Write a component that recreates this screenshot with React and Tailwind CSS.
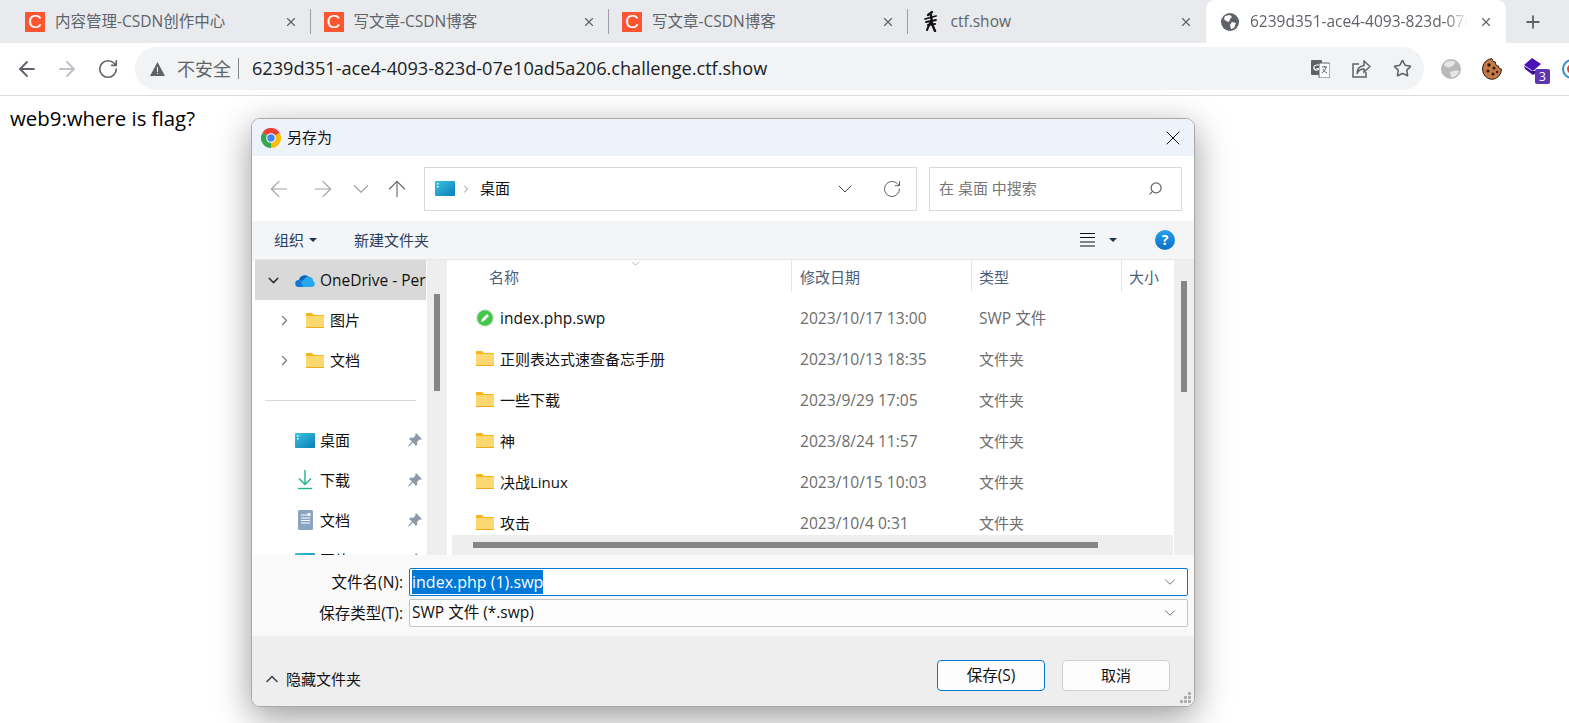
import { ChevronDown, ChevronRight, ChevronUp, ArrowLeft, ArrowRight, ArrowUp, RotateCw, X, Plus, Star, Search } from 'lucide-react';

const uiFont = "font-['Open_Sans','Noto_Sans_CJK_SC',sans-serif]";

const tabs = [
  { title: '内容管理-CSDN创作中心', icon: 'csdn' },
  { title: '写文章-CSDN博客', icon: 'csdn' },
  { title: '写文章-CSDN博客', icon: 'csdn' },
  { title: 'ctf.show', icon: 'ctf' },
];

const files = [
  { name: 'index.php.swp', date: '2023/10/17 13:00', type: 'SWP 文件', swp: true },
  { name: '正则表达式速查备忘手册', date: '2023/10/13 18:35', type: '文件夹' },
  { name: '一些下载', date: '2023/9/29 17:05', type: '文件夹' },
  { name: '神', date: '2023/8/24 11:57', type: '文件夹' },
  { name: '决战Linux', date: '2023/10/15 10:03', type: '文件夹' },
  { name: '攻击', date: '2023/10/4 0:31', type: '文件夹' },
];

const CsdnIcon = () => (
  <div className="w-5 h-5 bg-[#fc5531] flex items-center justify-center text-white text-[19px] leading-none font-['Liberation_Sans',sans-serif]">C</div>
);

const CtfIcon = () => (
  <svg width="16" height="21" viewBox="0 0 16 21" fill="none" stroke="#111" strokeLinecap="round">
    <path d="M9 1L5 4" strokeWidth="2.200" />
    <path d="M2 8l11-3M3 11l10-2" strokeWidth="1.800" />
    <path d="M8 4l1 9 3 7" strokeWidth="2.400" />
    <path d="M7 12L4 19M5 14l7-1" strokeWidth="2" />
  </svg>
);

const GlobeIcon = () => (
  <svg width="18" height="18" viewBox="0 0 18 18">
    <circle cx="9" cy="9" r="9" fill="#5f6368" />
    <path d="M4 3l5-1 2 2-2 2-1 3-3-1-2-2zM11 9l4 1-2 5-3 1-1-4z" fill="#fff" />
  </svg>
);

const ChromeIcon = () => (
  <svg width="20" height="20" viewBox="0 0 20 20">
    <path d="M10 10L1.3 5A10 10 0 0 1 18.7 5z" fill="#ea4335" />
    <path d="M10 10L18.7 5A10 10 0 0 1 10 20z" fill="#fbbc05" />
    <path d="M10 10L10 20A10 10 0 0 1 1.3 5z" fill="#34a853" />
    <circle cx="10" cy="10" r="4.8" fill="#fff" />
    <circle cx="10" cy="10" r="3.7" fill="#4285f4" />
  </svg>
);

const DesktopIcon = ({ id }) => (
  <svg width="20" height="15" viewBox="0 0 20 15">
    <defs>
      <linearGradient id={id} x1="0" y1="0" x2="1" y2="1">
        <stop offset="0" stopColor="#3cc4e0" />
        <stop offset="1" stopColor="#0a7db8" />
      </linearGradient>
    </defs>
    <rect width="20" height="15" rx="1" fill={`url(#${id})`} />
    <rect x="2" y="2" width="1.5" height="1.5" fill="#fff" />
    <rect x="2" y="5" width="1.5" height="1.5" fill="#fff" />
  </svg>
);

const FolderIcon = () => (
  <svg width="18" height="15" viewBox="0 0 18 15">
    <path d="M0 1a1 1 0 0 1 1-1h5l2 2h9a1 1 0 0 1 1 1v2H0z" fill="#f9b418" />
    <path d="M0 3h18v11a1 1 0 0 1-1 1H1a1 1 0 0 1-1-1z" fill="#fcd871" />
    <path d="M0 14h18v.2a.8.8 0 0 1-.8.8H.8a.8.8 0 0 1-.8-.8z" fill="#eea916" />
  </svg>
);

const SwpIcon = () => (
  <svg width="18" height="18" viewBox="0 0 18 18">
    <circle cx="9" cy="9" r="9" fill="#e5e5e5" />
    <circle cx="9" cy="9" r="7.8" fill="#3fc84a" />
    <path d="M5 13l1-3 5-5 2 2-5 5z" fill="#fff" />
  </svg>
);

const OneDriveIcon = () => (
  <svg width="20" height="13" viewBox="0 0 20 13">
    <path d="M4 6a6 6 0 0 1 10-3l-5 5z" fill="#0364b8" />
    <path d="M3.500 13A3.500 3.500 0 0 1 4 6l4 1 3 3-3 3z" fill="#0f78d4" />
    <path d="M8 13h9a3 3 0 0 0 1.200-5.700A5 5 0 0 0 9 5L6 8z" fill="#28a8ea" />
  </svg>
);

const DownloadIcon = () => (
  <svg width="16" height="20" viewBox="0 0 16 20" fill="none" stroke="#1db393" strokeWidth="1.400">
    <path d="M8 0v14M2 8.500l6 6 6-6" />
    <path d="M1 18.500h14" />
  </svg>
);

const DocIcon = () => (
  <svg width="15" height="20" viewBox="0 0 15 20">
    <rect width="15" height="20" rx="1.500" fill="#8ba4c4" />
    <path d="M3 5h6M3 8h9M3 10.500h9M3 13h9" stroke="#fff" strokeWidth="1" />
    <rect x="9.500" y="3" width="3" height="3" fill="#fff" />
  </svg>
);

const PinIcon = () => (
  <svg width="14" height="14" viewBox="0 0 14 14" fill="#8d9aa6">
    <path d="M8 0l6 6-1.500.8-1-.4L9 9l.3 2.500L8 13 5 9.500 1 13.500 0 13l4-4.500L1 6l1.500-1.500L5 5l2.500-2.500-.3-1z" />
  </svg>
);

const HelpIcon = () => (
  <div className="w-5 h-5 rounded-full bg-gradient-to-b from-[#2aa0ec] to-[#0a6fc4] flex items-center justify-center text-white text-[14px] font-bold leading-none">?</div>
);

const TabStrip = () => (
  <div className="flex h-[43px] bg-[#e8eaed] pl-[12px]">
    {tabs.map((tab, i) => (
      <div key={i} className="relative flex items-center w-[298.500px] h-full pl-[13px] pr-[13px] text-[#5f6368]">
        <div className="w-[20px] flex justify-center shrink-0">{tab.icon === 'csdn' ? <CsdnIcon /> : <CtfIcon />}</div>
        <span className="ml-[10px] text-[15.500px] flex-1 whitespace-nowrap">{tab.title}</span>
        <X size={14} strokeWidth={2} className="text-[#5f6368]" />
        {i < 3 && <div className="absolute right-0 top-[9px] h-[25px] w-px bg-[#9aa0a6]" />}
      </div>
    ))}
    <div className="flex items-center w-[300px] h-full bg-white rounded-t-[9px] pl-[15px] pr-[13px] text-[#5f6368]">
      <GlobeIcon />
      <span className="ml-[11px] text-[15.500px] flex-1 whitespace-nowrap overflow-hidden [mask-image:linear-gradient(to_right,black_90%,transparent)]">6239d351-ace4-4093-823d-07e10ad5a206.challenge.ctf.show</span>
      <X size={14} strokeWidth={2} className="ml-[11px] shrink-0" />
    </div>
    <div className="flex items-center ml-[17px]">
      <Plus size={20} strokeWidth={2.200} className="text-[#5f6368]" />
    </div>
  </div>
);

const AddressBar = () => (
  <div className="flex items-center h-[53px] bg-white border-b border-[#dadce0] pb-[1px]">
    <div className="flex items-center w-[135px] pl-[15px] shrink-0">
      <ArrowLeft size={24} strokeWidth={1.800} className="text-[#5f6368]" />
      <ArrowRight size={24} strokeWidth={1.800} className="text-[#bdc1c6] ml-[16px]" />
      <RotateCw size={22} strokeWidth={1.800} className="text-[#5f6368] ml-[18px]" />
    </div>
    <div className="flex items-center w-[1289px] h-[43px] rounded-full bg-[#f1f3f4] pl-[15px] pr-[12px] shrink-0">
      <svg width="15" height="14" viewBox="0 0 15 14"><path d="M7.500 0L15 14H0z" fill="#5f6368" /><path d="M7 5h1v5H7zM7 11h1v1H7z" fill="#f1f3f4" /></svg>
      <span className="ml-[12px] text-[18px] text-[#5f6368] leading-none">不安全</span>
      <span className="ml-[7px] w-px h-[21px] bg-[#80868b]" />
      <span className="ml-[13px] text-[18.150px] text-[#202124] leading-none whitespace-nowrap">6239d351-ace4-4093-823d-07e10ad5a206.challenge.ctf.show</span>
      <div className="ml-auto flex items-center gap-[22px] text-[#5f6368]">
        <svg width="19" height="18" viewBox="0 0 19 18">
          <rect x="0" y="0" width="11" height="15" rx="1" fill="#5f6368" />
          <rect x="8" y="3" width="11" height="15" rx="1" fill="#fff" stroke="#5f6368" />
          <path d="M11 7h5M13.500 6v1M15 7c-.5 3-2.500 5-4 6M12 9c.8 2 2.500 3.500 4 4" stroke="#5f6368" fill="none" />
          <path d="M8 5H5.500a2.500 2.500 0 1 0 2.200 3.500H5.500" stroke="#fff" fill="none" strokeWidth="1.200" />
        </svg>
        <svg width="19" height="18" viewBox="0 0 19 18" fill="none" stroke="#5f6368" strokeWidth="1.500">
          <path d="M7 4H1v13h13v-5" />
          <path d="M12 1l6 5.500-6 5.500V9C8 9 6 11 5 14c0-5 3-8 7-8.500z" />
        </svg>
        <Star size={19} strokeWidth={2} />
      </div>
    </div>
    <div className="flex items-center pl-[17px] gap-[21px] h-full shrink-0">
      <svg width="20" height="20" viewBox="0 0 20 20">
        <circle cx="10" cy="10" r="10" fill="#b9b9b9" />
        <path d="M3 5c3-4 9-4 11-2 1 2-2 3-4 5-3 1-7 0-7-3zM9 13c3-1 7-2 9-1-1 4-5 7-8 6z" fill="#e6e6e6" />
      </svg>
      <svg width="20" height="22" viewBox="0 0 20 22">
        <path d="M10 .7a9.500 10.300 0 1 0 9.500 10.300c-2 0-3-1-3-3-2 0-3.500-1.500-3-4-2 0-3.500-1.500-3.500-3.300z" fill="#c57a45" stroke="#2b1a10" strokeWidth="1" />
        <circle cx="7" cy="7" r="1.700" fill="#2b1a10" /><circle cx="12" cy="10" r="1.500" fill="#2b1a10" />
        <circle cx="6" cy="13" r="1.500" fill="#2b1a10" /><circle cx="11" cy="16" r="1.500" fill="#2b1a10" />
        <circle cx="15" cy="14" r="1.200" fill="#2b1a10" />
      </svg>
      <div className="relative w-[20px] h-[22px]">
        <svg width="20" height="22" viewBox="0 0 20 22">
          <path d="M9 13L1 8l1 3 8 6 6-4z" fill="#3c0c9c" />
          <path d="M9 0l9 6-8 7-9-6z" fill="#4a12b8" />
        </svg>
        <div className="absolute left-[12px] top-[11px] w-[15px] h-[15px] rounded-[2px] bg-[#5e35b1] text-white text-[12px] leading-[15px] text-center">3</div>
      </div>
      <div className="w-[20px] h-[20px] rounded-full border-[2px] border-[#2a8fc8] shrink-0 flex items-center justify-center -ml-[2px]">
        <div className="w-[10px] h-[10px] rounded-full border-[2px] border-[#e0453a]" />
      </div>
    </div>
  </div>
);

const NavRow = () => (
  <div className="flex items-center h-[65px] bg-white pl-[14px] shrink-0">
    <ArrowLeft size={26} strokeWidth={1} className="text-[#a0a0a0]" />
    <ArrowRight size={26} strokeWidth={1} className="text-[#a0a0a0] ml-[18px]" />
    <ChevronDown size={26} strokeWidth={1} className="text-[#a0a0a0] ml-[12px]" />
    <ArrowUp size={26} strokeWidth={1} className="text-[#606060] ml-[10px]" />
    <div className="flex items-center w-[493px] h-[44px] border border-[#d9d9d9] ml-[14px] pl-[10px] pr-[14px]">
      <DesktopIcon id="desk-nav" />
      <ChevronRight size={12} strokeWidth={1.500} className="text-[#666] ml-[5px]" />
      <span className="ml-[8px] text-[15px] text-[#111]">桌面</span>
      <ChevronDown size={24} strokeWidth={1} className="text-[#444] ml-auto" />
      <RotateCw size={20} strokeWidth={1.100} className="text-[#555] ml-[25px]" />
    </div>
    <div className="flex items-center w-[253px] h-[44px] border border-[#d9d9d9] ml-[12px] pl-[9px] pr-[18px]">
      <span className="text-[15px] text-[#777] whitespace-nowrap">在 桌面 中搜索</span>
      <Search size={15} strokeWidth={2} className="text-[#666] ml-auto -scale-x-100" />
    </div>
  </div>
);

const Toolbar = () => (
  <div className="flex items-center h-[39px] bg-[#f4f5f7] border-b border-[#e8e8e8] pl-[22px] pr-[19px] shrink-0 text-[15px] text-[#2a3f5f]">
    <span>组织</span>
    <span className="ml-[5px] w-0 h-0 border-x-[4px] border-x-transparent border-t-[4px] border-t-[#1f3356]" />
    <span className="ml-[37px]">新建文件夹</span>
    <svg className="ml-auto" width="15" height="14" viewBox="0 0 15 14" stroke="#111" strokeWidth="1">
      <path d="M0 .5h15M0 4.500h15M0 9h15M0 13h15" />
    </svg>
    <span className="ml-[14px] w-0 h-0 border-x-[4px] border-x-transparent border-t-[4px] border-t-[#1f3356]" />
    <span className="ml-[38px]"><HelpIcon /></span>
  </div>
);

const SideRow = ({ icon, label, expand, pin, selected, indent }) => (
  <div className={`flex items-center h-[40px] w-[171px] shrink-0 ${selected ? 'bg-[#d9d9d9]' : ''}`}>
    <div className={`flex justify-center shrink-0 ${indent ? 'w-[58px]' : 'w-[36px]'}`}>
      {expand === 'open' && <ChevronDown size={17} strokeWidth={2} className="text-[#333]" />}
      {expand === 'closed' && <ChevronRight size={17} strokeWidth={1.500} className="text-[#777]" />}
    </div>
    <div className={`w-[24px] flex justify-center shrink-0 ${indent ? '-ml-[10px]' : 'ml-[2px]'}`}>{icon}</div>
    <span className={`ml-[3px] mt-[1px] text-[#111] whitespace-nowrap overflow-hidden flex-1 ${selected ? 'text-[15.500px]' : 'text-[15px]'}`}>{label}</span>
    {pin && <span className="pr-[4px]"><PinIcon /></span>}
  </div>
);

const Sidebar = () => (
  <div className="w-[175px] pl-[3px] h-full overflow-hidden flex flex-col shrink-0">
    <SideRow selected expand="open" icon={<OneDriveIcon />} label="OneDrive - Personal" />
    <SideRow indent expand="closed" icon={<FolderIcon />} label="图片" />
    <SideRow indent expand="closed" icon={<FolderIcon />} label="文档" />
    <div className="h-[40px] flex items-center shrink-0">
      <div className="ml-[10px] w-[151px] h-px bg-[#d8d8d8]" />
    </div>
    <SideRow pin icon={<DesktopIcon id="desk-side" />} label="桌面" />
    <SideRow pin icon={<DownloadIcon />} label="下载" />
    <SideRow pin icon={<DocIcon />} label="文档" />
    <SideRow pin icon={<DesktopIcon id="desk-pics" />} label="图片" />
  </div>
);

const FileList = () => (
  <div className="relative flex-1 min-w-0 h-full flex">
    <div className="w-[725px] ml-[2px] h-full overflow-hidden shrink-0">
      <div className="flex h-[32px] text-[15px] text-[#4c607a]">
        <div className="relative w-[343px] border-r border-[#e5e5e5] pl-[40px] pt-[6px]">
          名称
          <ChevronDown size={13} strokeWidth={1} className="absolute left-[180px] top-[-3px] text-[#777]" />
        </div>
        <div className="w-[180px] border-r border-[#e5e5e5] pl-[8px] pt-[6px]">修改日期</div>
        <div className="w-[150px] border-r border-[#e5e5e5] pl-[7px] pt-[6px]">类型</div>
        <div className="flex-1 pl-[7px] pt-[6px]">大小</div>
      </div>
      <div className="pt-[6px]">
        {files.map((f) => (
          <div key={f.name} className="flex items-center h-[41px]">
            <div className="flex items-center w-[343px] pl-[27px] text-[#111]">
              <span className="w-[18px] flex justify-center -mt-[2px]">{f.swp ? <SwpIcon /> : <FolderIcon />}</span>
              <span className={`ml-[6px] whitespace-nowrap ${f.swp ? 'text-[15.500px]' : 'text-[15px]'}`}>{f.name}</span>
            </div>
            <div className="w-[180px] pl-[8px] text-[15.600px] text-[#6d6d6d] whitespace-nowrap">{f.date}</div>
            <div className={`pl-[7px] text-[#6d6d6d] whitespace-nowrap ${f.swp ? 'text-[15.500px]' : 'text-[15px]'}`}>{f.type}</div>
          </div>
        ))}
      </div>
    </div>
    <div className="w-[20px] bg-[#eeeeee] pl-[7px] pt-[21px] shrink-0">
      <div className="w-[6px] h-[111px] bg-[#868686]" />
    </div>
    <div className="absolute left-[5px] bottom-0 w-[721px] h-[20px] bg-[#eeeeee] pl-[21px] pt-[7px]">
      <div className="w-[625px] h-[6px] bg-[#868686]" />
    </div>
  </div>
);

const FormField = ({ label, focused, value }) => (
  <div className="flex items-start h-[31px]">
    <label className="w-[157px] h-[28px] leading-[28px] text-right text-[15.500px] text-[#111] shrink-0 pr-[6px]">{label}</label>
    <div className={`flex items-center w-[779px] h-[28px] rounded-[2px] pl-[2px] pr-[8px] ${focused ? 'text-[16px] bg-white border border-[#0078d4]' : 'text-[15.500px] bg-[#fdfdfd] border border-[#c4c4c4]'}`}>
      {focused ? <span className="bg-[#0078d7] text-white h-[24px] leading-[24px]">{value}</span> : <span className="text-[#111]">{value}</span>}
      <ChevronDown size={18} strokeWidth={1.100} className="ml-auto text-[#555]" />
    </div>
  </div>
);

const SaveDialog = () => (
  <div className={`absolute left-[251px] top-[118px] w-[944px] h-[589px] flex flex-col rounded-[9px] overflow-hidden border border-[#a8a8a8] shadow-[0_10px_35px_rgba(0,0,0,0.4)] bg-white ${uiFont}`}>
    <div className="flex items-center h-[37px] bg-[#eef2fa] pl-[9px] pr-[9px] shrink-0">
      <ChromeIcon />
      <span className="ml-[6px] -mt-[1px] text-[15px] text-[#111]">另存为</span>
      <X size={24} strokeWidth={1} className="ml-auto text-[#111]" />
    </div>
    <NavRow />
    <Toolbar />
    <div className="flex h-[295px] shrink-0 bg-white">
      <Sidebar />
      <div className="w-[20px] h-full bg-[#eeeeee] pl-[7px] pt-[34px] shrink-0">
        <div className="w-[6px] h-[97px] bg-[#868686]" />
      </div>
      <FileList />
    </div>
    <div className="h-[81px] bg-[#f9f9f9] pt-[13px] shrink-0">
      <FormField focused label="文件名(N):" value="index.php (1).swp" />
      <FormField label="保存类型(T):" value="SWP 文件 (*.swp)" />
    </div>
    <div className="relative flex items-center flex-1 bg-[#eeeeee] pl-[10px] pr-[24px] pt-[9px]">
      <ChevronUp size={20} strokeWidth={1.800} className="text-[#444] mt-[7px]" />
      <span className="ml-[4px] mt-[7px] text-[15px] text-[#111]">隐藏文件夹</span>
      <button className="ml-auto w-[108px] h-[31px] rounded-[4px] bg-[#fdfdfd] border border-[#0078d4] text-[15.500px] text-[#111]">保存(S)</button>
      <button className="ml-[17px] w-[108px] h-[31px] rounded-[4px] bg-[#fdfdfd] border border-[#cfcfcf] text-[15px] text-[#111]">取消</button>
      <svg className="absolute right-[2px] bottom-[2px]" width="12" height="12" viewBox="0 0 12 12" fill="#b0b0b0">
        <rect x="8" y="0" width="3" height="3" /><rect x="4" y="4" width="3" height="3" /><rect x="8" y="4" width="3" height="3" />
        <rect x="0" y="8" width="3" height="3" /><rect x="4" y="8" width="3" height="3" /><rect x="8" y="8" width="3" height="3" />
      </svg>
    </div>
  </div>
);

export default function App() {
  return (
    <div className={`relative w-[1569px] h-[723px] overflow-hidden bg-white ${uiFont}`}>
      <TabStrip />
      <AddressBar />
      <p className="pl-[10px] pt-[10px] text-[20.400px] leading-[24px] text-black">web9:where is flag?</p>
      <SaveDialog />
    </div>
  );
}
